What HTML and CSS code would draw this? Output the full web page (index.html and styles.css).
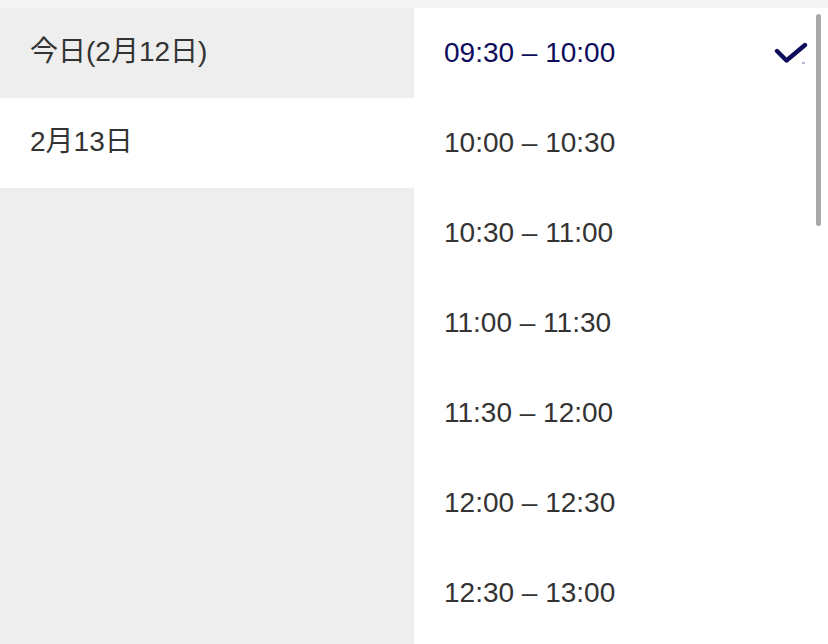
FILE: index.html
```html
<!DOCTYPE html>
<html lang="ja">
<head>
<meta charset="utf-8">
<link rel="stylesheet" href="styles.css">
</head>
<body>
<div class="picker">
  <ul class="dates">
    <li class="date active"><span>今日(2月12日)</span></li>
    <li class="date"><span>2月13日</span></li>
  </ul>
  <div class="times-wrap">
    <ul class="times">
      <li class="time selected"><span>09:30 – 10:00</span>
        <svg class="check" width="36" height="26" viewBox="0 0 36 26"><path d="M3 9 L12.5 18.5 L31 3" fill="none" stroke="#0d0d5c" stroke-width="4.4" stroke-linecap="round" stroke-linejoin="round"/><path d="M28 21 h3" stroke="#0d0d5c" stroke-width="1" opacity="0.6"/></svg>
      </li>
      <li class="time"><span>10:00 – 10:30</span></li>
      <li class="time"><span>10:30 – 11:00</span></li>
      <li class="time"><span>11:00 – 11:30</span></li>
      <li class="time"><span>11:30 – 12:00</span></li>
      <li class="time"><span>12:00 – 12:30</span></li>
      <li class="time"><span>12:30 – 13:00</span></li>
    </ul>
    <div class="scrollbar"></div>
  </div>
</div>
</body>
</html>
```
FILE: styles.css
```css
html, body {
  margin: 0;
  padding: 0;
  background: #f4f4f4;
}
body {
  padding-top: 8px;
  height: 644px;
  box-sizing: border-box;
  overflow: hidden;
  font-family: "Liberation Sans", "Noto Sans CJK JP", sans-serif;
  font-size: 28px;
  color: #333333;
}
ul {
  list-style: none;
  margin: 0;
  padding: 0;
}
.picker {
  display: flex;
  height: 636px;
}
.dates {
  width: 414px;
  background: #eeeeee;
}
.date {
  height: 90px;
  display: flex;
  align-items: center;
  padding-left: 30px;
  background: #ffffff;
  line-height: 32px;
  font-family: "Liberation Sans", "Noto Sans CJK JP", sans-serif;
}
.date span {
  display: block;
  margin-top: -3px;
}
.date.active {
  background: #eeeeee;
}
.times-wrap {
  flex: 1;
  position: relative;
  background: #ffffff;
  overflow: hidden;
}
.time {
  height: 90px;
  display: flex;
  align-items: center;
  justify-content: space-between;
  padding-left: 30px;
  padding-right: 18px;
}
.time.selected {
  color: #0d0d5c;
}
.check {
  display: block;
  margin-top: 4px;
}
.scrollbar {
  position: absolute;
  right: 7px;
  top: 6px;
  width: 5px;
  height: 212px;
  border-radius: 3px;
  background: #a9a9a9;
}
```
